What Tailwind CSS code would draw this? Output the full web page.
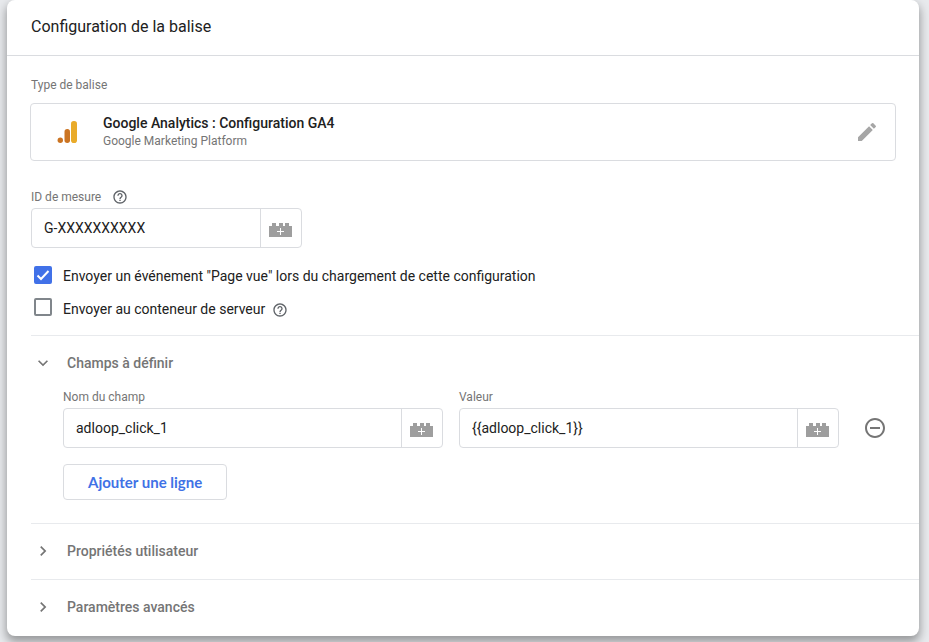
<!DOCTYPE html>
<html lang="fr">
<head>
<meta charset="utf-8">
<meta name="viewport" content="width=device-width, initial-scale=1">
<title>Configuration de la balise</title>
<script src="https://cdn.jsdelivr.net/npm/@tailwindcss/browser@4"></script>
</head>
<body class="bg-[#e8eaed] px-2 pb-1.5 font-['Roboto',sans-serif] text-sm text-[#212121]">
<svg class="hidden">
  <symbol id="help" viewBox="0 0 24 24"><path d="M11 18h2v-2h-2v2zm1-16C6.48 2 2 6.48 2 12s4.480 10 10 10 10-4.480 10-10S17.520 2 12 2zm0 18c-4.410 0-8-3.590-8-8s3.590-8 8-8 8 3.590 8 8-3.590 8-8 8zm0-14c-2.210 0-4 1.790-4 4h2c0-1.100.900-2 2-2s2 .900 2 2c0 2-3 1.750-3 5h2c0-2.250 3-2.500 3-5 0-2.210-1.790-4-4-4z"/></symbol>
  <symbol id="brick" viewBox="0 0 23 14"><path fill="#9e9e9e" d="M0 14V3h3V0h4v3h3V0h4v3h2V0h4v3h3v11z"/><path stroke="#fff" d="M11.500 5v7M8 8.500h7"/></symbol>
  <symbol id="chevron" viewBox="0 0 24 24"><path d="M10 6 8.590 7.410 13.170 12l-4.580 4.590L10 18l6-6z"/></symbol>
</svg>
<main class="-ml-px mr-0.5 rounded-lg bg-white shadow-[0_5px_10px_1px_rgba(0,0,0,0.35)]">
  <header class="flex h-14 items-center border-b border-[#dadce0] px-6">
    <h1 class="pb-0.5 text-base font-normal">Configuration de la balise</h1>
  </header>

  <section class="px-6 pt-5">
    <h2 class="text-xs leading-[18px] text-[#757575]">Type de balise</h2>
    <div class="-ml-px mt-[9px] mr-[-1px] flex h-[58px] items-center rounded border border-[#dadce0] pr-4 pl-6">
      <svg class="size-6 shrink-0" viewBox="0 0 24 24"><rect x="16" y="1" width="6" height="22" rx="2.800" fill="#e9ab2a"/><rect x="9.500" y="9" width="5.500" height="14" rx="2.700" fill="#cb7422"/><circle cx="5.300" cy="20.300" r="2.700" fill="#cb7422"/></svg>
      <div class="ml-6 flex-1">
        <p class="font-medium leading-[18px]">Google Analytics : Configuration GA4</p>
        <p class="text-xs leading-[18px] text-[#757575]">Google Marketing Platform</p>
      </div>
      <button type="button" aria-label="Modifier"><svg class="size-6" viewBox="0 0 24 24" fill="#a6a6a6"><path d="M3 17.250V21h3.750L17.810 9.940l-3.750-3.750L3 17.250zM20.710 7.040a1 1 0 0 0 0-1.410l-2.340-2.340a1 1 0 0 0-1.410 0l-1.830 1.830 3.750 3.750 1.830-1.830z"/></svg></button>
    </div>

    <div class="mt-[27px] flex items-center gap-[11px] text-xs leading-[18px] text-[#757575]">
      <label for="measure">ID de mesure</label>
      <button type="button" aria-label="Aide"><svg class="size-4" fill="#5f6368"><use href="#help"/></svg></button>
    </div>
    <div class="mt-0.5 flex h-10 w-full max-w-[271px] rounded border border-[#dadce0]">
      <input id="measure" value="G-XXXXXXXXXX" class="min-w-0 flex-1 px-3 outline-none">
      <button type="button" aria-label="Choisir une variable" class="flex w-[41px] items-center border-l border-[#dadce0] pt-1 pl-2"><svg class="h-3.5 w-[23px]"><use href="#brick"/></svg></button>
    </div>

    <div class="mt-[18px] ml-[3px] flex items-start">
      <span class="grid size-[18px]">
        <input id="pageview" type="checkbox" checked class="peer col-start-1 row-start-1 size-[18px] appearance-none rounded-xs border-2 border-[#80868b] checked:border-[#4171e8] checked:bg-[#4171e8]">
        <svg class="pointer-events-none invisible col-start-1 row-start-1 size-[18px] peer-checked:visible" viewBox="0 0 18 18" fill="none" stroke="#fff" stroke-width="2"><path d="m3.500 9.500 3.500 3.500 7.500-8"/></svg>
      </span>
      <label for="pageview" class="ml-[11px]">Envoyer un événement "Page vue" lors du chargement de cette configuration</label>
    </div>
    <div class="mt-3 ml-[3px] flex items-start pb-4">
      <input id="server" type="checkbox" class="size-[18px] appearance-none rounded-xs border-2 border-[#80868b] checked:bg-[#4171e8]">
      <label for="server" class="ml-[11px] pt-px">Envoyer au conteneur de serveur</label>
      <button type="button" aria-label="Aide" class="ml-[7px] pt-1"><svg class="size-4" fill="#5f6368"><use href="#help"/></svg></button>
    </div>
  </section>

  <section class="ml-6 border-t border-[#e8eaed]">
    <button type="button" aria-expanded="true" class="flex h-[52px] w-full items-center pt-px text-left font-medium text-[#757575]">
      <svg class="mr-3.5 ml-0.5 size-5 rotate-90" fill="#757575"><use href="#chevron"/></svg>Champs à définir
    </button>
    <div class="flex items-end pr-6 pl-8">
      <div class="flex-1">
        <label for="name" class="block text-xs leading-[18px] text-[#757575]">Nom du champ</label>
        <div class="mt-0.5 flex h-10 rounded border border-[#dadce0]">
          <input id="name" value="adloop_click_1" class="min-w-0 flex-1 px-3 outline-none">
          <button type="button" aria-label="Choisir une variable" class="flex w-[41px] items-center border-l border-[#dadce0] pt-1 pl-2"><svg class="h-3.5 w-[23px]"><use href="#brick"/></svg></button>
        </div>
      </div>
      <div class="ml-4 flex-1">
        <label for="value" class="block text-xs leading-[18px] text-[#757575]">Valeur</label>
        <div class="mt-0.5 flex h-10 rounded border border-[#dadce0]">
          <input id="value" value="{{adloop_click_1}}" class="min-w-0 flex-1 px-3 outline-none">
          <button type="button" aria-label="Choisir une variable" class="flex w-[41px] items-center border-l border-[#dadce0] pt-1 pl-2"><svg class="h-3.5 w-[23px]"><use href="#brick"/></svg></button>
        </div>
      </div>
      <button type="button" aria-label="Supprimer la ligne" class="ml-4 flex size-10 items-center justify-center"><svg class="size-6" viewBox="0 0 24 24" fill="#757575"><path d="M7 11v2h10v-2H7zm5-9C6.480 2 2 6.480 2 12s4.480 10 10 10 10-4.480 10-10S17.520 2 12 2zm0 18c-4.410 0-8-3.590-8-8s3.590-8 8-8 8 3.590 8 8-3.590 8-8 8z"/></svg></button>
    </div>
    <button type="button" class="mt-4 mb-[23px] ml-8 flex h-9 items-center rounded border border-[#dadce0] px-6 pt-0.5 font-['Lato',sans-serif] text-[15px] font-bold text-[#3f72e6]">Ajouter une ligne</button>
  </section>

  <section class="ml-6 border-t border-[#e8eaed]">
    <button type="button" aria-expanded="false" class="flex h-[55px] w-full items-center pb-0.5 text-left font-medium text-[#757575]">
      <svg class="mr-3.5 ml-0.5 size-5" fill="#757575"><use href="#chevron"/></svg>Propriétés utilisateur
    </button>
  </section>
  <section class="ml-6 border-t border-[#e8eaed]">
    <button type="button" aria-expanded="false" class="flex h-14 w-full items-center pb-0.5 text-left font-medium text-[#757575]">
      <svg class="mr-3.5 ml-0.5 size-5" fill="#757575"><use href="#chevron"/></svg>Paramètres avancés
    </button>
  </section>
</main>
</body>
</html>
